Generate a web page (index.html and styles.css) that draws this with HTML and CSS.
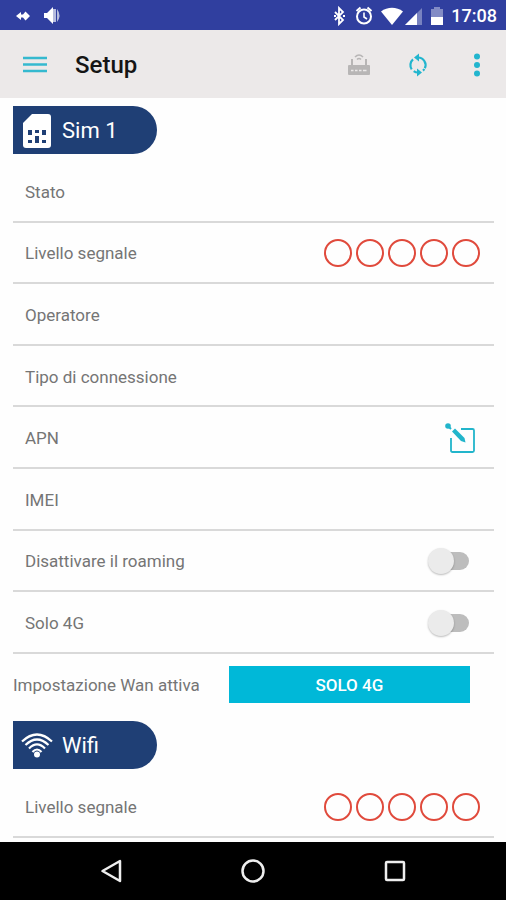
FILE: index.html
```html
<!DOCTYPE html>
<html lang="it">
<head>
<meta charset="utf-8">
<meta name="viewport" content="width=device-width, initial-scale=1">
<title>Setup</title>
<link rel="stylesheet" href="styles.css">
</head>
<body>
<div class="status">
  <svg class="status-left" width="48" height="20" viewBox="0 0 48 20" fill="#fff">
    <path d="M0 10l5-4v2.500h2l2.500-3 4.500 4.500-4.500 4.500-2.500-3H5V14z"/>
    <path d="M28 7h3l6-6v17l-6-6h-3z"/>
    <path d="M37 3h3v13h-3zM41 3q5 6.500 0 13z" opacity=".65"/>
  </svg>
  <div class="status-right">
    <svg width="112" height="20" viewBox="0 0 112 20" fill="none" stroke="#fff">
      <path d="M4 6l8 8-4 4V2l4 4-8 8" stroke-width="1.800"/>
      <path d="M3 10h2M12 10h2" stroke-width="2"/>
      <circle cx="33" cy="10.500" r="7" stroke-width="2"/>
      <path d="M33 6.500V11l3 2" stroke-width="1.600"/>
      <path d="M25.500 5l4-3.500M40.500 5l-4-3.500" stroke-width="2"/>
      <path d="M50 5.500C56.500 .500 65.500 .500 72 5.500L61 19z" fill="#fff" stroke="none"/>
      <path d="M91 2v17H74z" fill="#fff" stroke="none" opacity=".35"/>
      <path d="M86 7v12H74z" fill="#fff" stroke="none"/>
      <path d="M100 3h3V1h6v2h3v8h-12z" fill="#fff" stroke="none" opacity=".4"/>
      <path d="M100 11h12v8h-12z" fill="#fff" stroke="none"/>
    </svg>
    <span>17:08</span>
  </div>
</div>
<header class="appbar">
  <button class="icon-button" aria-label="Menu">
    <svg width="24" height="20" viewBox="0 0 24 20" stroke="#35b9cf" stroke-width="2.400"><path d="M0 3h24M0 9.500h24M0 16h24"/></svg>
  </button>
  <h1>Setup</h1>
  <div class="actions">
    <button class="icon-button" aria-label="Router">
      <svg width="24" height="24" viewBox="0 0 24 24">
        <path d="M2 12h2V6h2v6h12V6h2v6h2q1 0 1 1v8q0 1-1 1H2q-1 0-1-1v-8q0-1 1-1z" fill="#b8b6b6"/>
        <path d="M8 4q4-4 8 0M10 6.500q2-2 4 0" fill="none" stroke="#b8b6b6" stroke-width="1.600"/>
        <path d="M4 17.500h2.500M8 17.500h2.500M12 17.500h2.500M16 17.500h3.500" stroke="#ece9e9" stroke-width="1.500"/>
      </svg>
    </button>
    <button class="icon-button" aria-label="Aggiorna">
      <svg width="20" height="24" viewBox="0 0 20 24" fill="none" stroke="#22b5ce" stroke-width="2.200">
        <path d="M3.700 16.300A7.500 7.500 0 0 1 5 6.400M10 4.500a7.500 7.500 0 0 1 6.800 10.700M10 19.500a7.500 7.500 0 0 1-4.300-1.400M15 17.600a7.500 7.500 0 0 0 1.300-1.600"/>
        <path d="M11 .500v8l-5-4zM9 15.500v8l5-4z" fill="#22b5ce" stroke="none"/>
      </svg>
    </button>
    <button class="icon-button" aria-label="Altre opzioni">
      <svg width="8" height="24" viewBox="0 0 8 24" fill="#22b5ce"><circle cx="4" cy="3.500" r="3"/><circle cx="4" cy="12" r="3"/><circle cx="4" cy="20.500" r="3"/></svg>
    </button>
  </div>
</header>
<main>
  <h2 class="badge">
    <svg width="34" height="36" viewBox="0 0 34 36">
      <path d="M12 1h16q3 0 3 3v28q0 3-3 3H6q-3 0-3-3V10z" fill="#fff"/>
      <path d="M8 17h4v5H8zM15 17h4v3h-4zM22 17h4v5h-4zM8 27h4v3H8zM15 23h4v7h-4zM22 27h4v3h-4z" fill="#1f3f75"/>
    </svg>
    Sim 1
  </h2>
  <div class="row"><span>Stato</span></div>
  <div class="row"><span>Livello segnale</span><div class="signal"><i></i><i></i><i></i><i></i><i></i></div></div>
  <div class="row"><span>Operatore</span></div>
  <div class="row"><span>Tipo di connessione</span></div>
  <div class="row"><span>APN</span>
    <button class="icon-button edit" aria-label="Modifica APN">
      <svg width="32" height="32" viewBox="0 0 32 32" fill="none" stroke="#22b5cb">
        <path d="M17 7h11.500q1.500 0 1.500 1.500v20q0 1.500-1.500 1.500H8.500Q7 30 7 28.500V16" stroke-width="1.800"/>
        <path d="M8 9.500l3-3L20.500 16l1 4.500-4.500-1.500z" fill="#22b5cb" stroke="none"/>
        <circle cx="4" cy="4" r="2.800" fill="#22b5cb" stroke="none"/>
        <path d="M4 4l3 3" stroke-width="2"/>
      </svg>
    </button>
  </div>
  <div class="row"><span>IMEI</span></div>
  <div class="row"><label for="roaming">Disattivare il roaming</label><input class="switch" type="checkbox" role="switch" id="roaming"></div>
  <div class="row"><label for="only4g">Solo 4G</label><input class="switch" type="checkbox" role="switch" id="only4g"></div>
  <div class="row wan"><span>Impostazione Wan attiva</span><button class="mode">SOLO 4G</button></div>
  <h2 class="badge">
    <svg width="34" height="36" viewBox="0 0 34 36" fill="none" stroke="#fff" stroke-width="2.200">
      <path d="M2 13.500q15-14 30 0M5.500 17q11.500-11 23 0M9 20.500q8-8 16 0M12.500 24q4.500-5 9 0"/>
      <circle cx="17" cy="26.500" r="3" fill="#fff" stroke="none"/>
    </svg>
    Wifi
  </h2>
  <div class="row"><span>Livello segnale</span><div class="signal"><i></i><i></i><i></i><i></i><i></i></div></div>
</main>
<nav class="navbar">
  <button aria-label="Indietro"><svg width="24" height="24" viewBox="0 0 24 24"><path d="M21 2v20L3.500 12z"/></svg></button>
  <button aria-label="Home"><svg width="24" height="24" viewBox="0 0 24 24"><circle cx="12" cy="12" r="10.500"/></svg></button>
  <button aria-label="Recenti"><svg width="24" height="24" viewBox="0 0 24 24"><rect x="3" y="3" width="18" height="18" rx="1"/></svg></button>
</nav>
</body>
</html>
```
FILE: styles.css
```css
* { box-sizing: border-box; }

body {
  margin: 0;
  min-height: 100vh;
  display: flex;
  flex-direction: column;
  background: #fefefe;
  color: #757575;
  font-family: Roboto, "Liberation Sans", sans-serif;
  font-size: 17px;
}

svg { display: block; }

button {
  margin: 0;
  padding: 0;
  border: 0;
  background: none;
  font: inherit;
}

.status {
  height: 30px;
  padding: 1px 9px 0 16px;
  display: flex;
  align-items: center;
  justify-content: space-between;
  background: #303f9f;
  color: #fff;
  font-size: 18px;
  font-weight: 500;
}

.status-right {
  display: flex;
  align-items: center;
  gap: 8px;
}

.appbar {
  height: 68px;
  padding: 2px 25px 0 23px;
  display: flex;
  align-items: center;
  background: #ece9e9;
}

h1 {
  flex: 1;
  margin: 0 0 0 28px;
  color: #151515;
  font-size: 24px;
  font-weight: 500;
}

.actions {
  display: flex;
  align-items: center;
  gap: 37px;
}

.actions .icon-button:last-child { margin-left: 8px; }

main {
  flex: 1;
  padding: 8px 12px 4px 13px;
  display: flex;
  flex-direction: column;
}

.badge {
  width: 144px;
  height: 48px;
  margin: 0 0 7px;
  padding: 1px 0 0 7px;
  display: flex;
  align-items: center;
  gap: 8px;
  border-radius: 0 24px 24px 0;
  background: #1f3f75;
  color: #fff;
  font-size: 22px;
  font-weight: 400;
}

.row {
  flex: 1 0 60px;
  padding: 2px 14px 0 12px;
  display: flex;
  align-items: center;
  justify-content: space-between;
  border-bottom: 2px solid #d9d9d9;
}

.signal {
  display: flex;
  gap: 4px;
}

.signal i {
  width: 28px;
  height: 28px;
  border: 2px solid #e04a3c;
  border-radius: 50%;
}

.edit { margin-right: 4px; }

.switch {
  appearance: none;
  position: relative;
  width: 40px;
  height: 18px;
  margin: 0 11px 0 0;
  border-radius: 9px;
  background: #bdbdbd;
}

.switch::before {
  content: "";
  position: absolute;
  top: -4px;
  left: -1px;
  width: 26px;
  height: 26px;
  border-radius: 50%;
  background: #ebebeb;
  box-shadow: 0 1px 2px #0004;
}

.switch:checked::before { left: 15px; }

.wan {
  margin-bottom: 6px;
  padding: 0 24px 0 0;
  gap: 29px;
  border: 0;
}

.mode {
  flex: 1;
  height: 37px;
  background: #00b8d8;
  color: #fff;
  font-weight: 500;
}

.navbar {
  height: 58px;
  display: flex;
  justify-content: center;
  background: #000;
}

.navbar button {
  width: 28%;
  display: flex;
  align-items: center;
  justify-content: center;
}

.navbar svg {
  fill: none;
  stroke: #eee;
  stroke-width: 2.5;
  stroke-linejoin: round;
}
```
